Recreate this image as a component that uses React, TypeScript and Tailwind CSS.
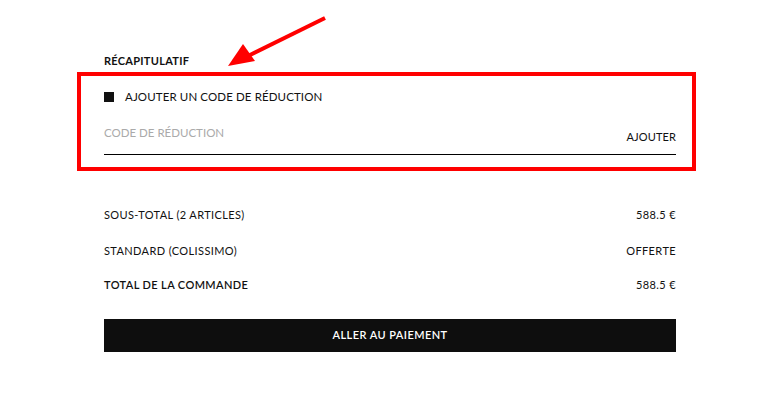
export default function App() {
  return (
    <div className="relative w-[770px] h-[417px] bg-white text-[#111] font-['Lato','Liberation_Sans',sans-serif]">
      <div className="ml-[104px] w-[572px] pt-[53px]">
        <h2 className="text-[11px] leading-[16px] font-bold tracking-[0.025em]">RÉCAPITULATIF</h2>

        <label className="mt-[20px] flex items-center gap-[11px]">
          <span className="w-[10px] h-[10px] bg-[#111]" />
          <span className="text-[11.5px] leading-[16px] tracking-[0.01em]">AJOUTER UN CODE DE RÉDUCTION</span>
        </label>

        <div className="mt-[20px] h-[30px] flex justify-between border-b border-black pb-[9px]">
          <span className="self-start text-[11.5px] leading-[16px] text-[#aaa]">CODE DE RÉDUCTION</span>
          <button className="self-end text-[11px] leading-[16px] tracking-[0.01em]">AJOUTER</button>
        </div>

        <div className="mt-[52px] text-[11px] leading-[16px] tracking-[0.035em]">
          <div className="flex justify-between">
            <span>SOUS-TOTAL (2 ARTICLES)</span>
            <span>588.5 €</span>
          </div>
          <div className="mt-[20px] flex justify-between">
            <span>STANDARD (COLISSIMO)</span>
            <span>OFFERTE</span>
          </div>
          <div className="mt-[18px] flex justify-between">
            <span className="font-semibold">TOTAL DE LA COMMANDE</span>
            <span>588.5 €</span>
          </div>
        </div>

        <button className="mt-[26px] w-full h-[33px] bg-[#0e0e0e] text-white text-[11px] tracking-[0.04em] font-semibold">
          ALLER AU PAIEMENT
        </button>
      </div>

      <div className="absolute left-[77px] top-[72px] w-[619px] h-[99px] border-4 border-[#ff0000] pointer-events-none" />
      <svg className="absolute left-0 top-0 pointer-events-none" width="770" height="417">
        <line x1="325" y1="18" x2="248" y2="56" stroke="#ff0000" strokeWidth="4" />
        <polygon points="228,66 243,44 255,61" fill="#ff0000" />
      </svg>
    </div>
  )
}
